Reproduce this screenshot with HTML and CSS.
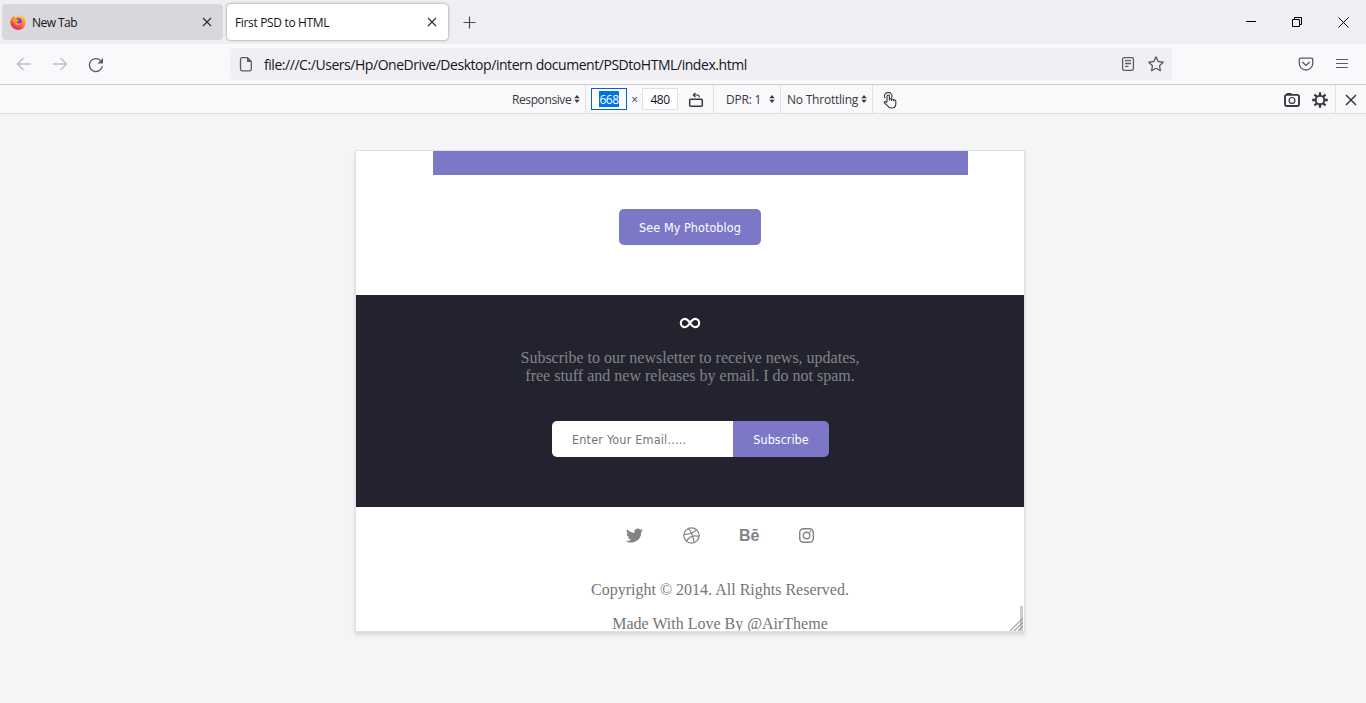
FILE: index.html
```html
<!DOCTYPE html>
<html lang="en">
<head>
<meta charset="utf-8">
<title>First PSD to HTML</title>
<link rel="stylesheet" href="styles.css">
</head>
<body>
<header class="tabbar">
  <div class="tab">
    <svg class="fox" width="16" height="16" viewBox="0 0 16 16">
      <defs>
        <linearGradient id="fire" x1=".8" y1="0" x2=".3" y2="1"><stop offset="0" stop-color="#ffe23e"/><stop offset=".45" stop-color="#ff8a28"/><stop offset=".75" stop-color="#ff4048"/><stop offset="1" stop-color="#e8208a"/></linearGradient>
      </defs>
      <path fill="url(#fire)" d="M2.2 3.2 3.7 1.7l.9 1.5 2.3-.3L9.4.3c.4 1.3 1.3 1.8 2.3 2.3l.7-.5c1.700 1.300 3.100 3.400 3.300 6.100A7.700 7.700 0 0 1 .3 8.400c0-2 .8-3.600 1.900-5.200z"/>
      <circle cx="8.300" cy="7.700" r="3.600" fill="#7a42d8"/>
      <path fill="#ff9a2c" d="M3.200 4.600c1.700-.8 3.100-.2 4.100.8l1.800.3c-.2.9-1.400 1.100-1.900 1.500-.5 1.500.5 2.300 2 2.200 1 0 1.600-.5 2.300-.3-.8 1.900-2.700 2.700-4.600 2.200-2.500-.6-4.200-3-3.700-6.700z"/>
    </svg>
    <span class="tab-title tab-new">New Tab</span>
    <svg class="tab-close" width="10" height="10" viewBox="0 0 10 10"><path d="M1 1l8 8M9 1L1 9"/></svg>
  </div>
  <div class="tab tab-active">
    <span class="tab-title">First PSD to HTML</span>
    <svg class="tab-close" width="10" height="10" viewBox="0 0 10 10"><path d="M1 1l8 8M9 1L1 9"/></svg>
  </div>
  <svg class="new-tab" width="13" height="13" viewBox="0 0 13 13"><path d="M6.500 .5v12M.5 6.500h12"/></svg>
  <div class="window-buttons">
    <svg width="10" height="10" viewBox="0 0 10 10"><path d="M0 4.500h10"/></svg>
    <svg width="10" height="10" viewBox="0 0 10 10"><path d="M.5 2.500h7v7h-7zM2.500 2.500v-2h7v7h-2"/></svg>
    <svg width="11" height="11" viewBox="0 0 11 11"><path d="M.5.5l10 10M10.500.5l-10 10"/></svg>
  </div>
</header>

<nav class="navbar">
  <svg class="nav-icon faded" width="16" height="16" viewBox="0 0 16 16"><path d="M15 8H1.500M7.500 2l-6 6 6 6"/></svg>
  <svg class="nav-icon faded" width="16" height="16" viewBox="0 0 16 16"><path d="M1 8h13.500M8.500 2l6 6-6 6"/></svg>
  <svg class="nav-icon reload" width="16" height="16" viewBox="0 0 16 16"><path d="M14.300 9A6.500 6.500 0 1 1 12.600 3.600"/><path class="solid" d="M15 1v5.500H9.500z"/></svg>
  <div class="urlbar">
    <svg class="nav-icon" width="14" height="16" viewBox="0 0 14 16"><path d="M3 1.700h5.500L12.300 5.500v7.800a1.500 1.500 0 0 1-1.500 1.500H3a1.500 1.500 0 0 1-1.500-1.500V3.200A1.500 1.500 0 0 1 3 1.700z"/><path class="solid" d="M8 1.500V6h4.500z"/></svg>
    <span class="url">file:///C:/Users/Hp/OneDrive/Desktop/intern document/PSDtoHTML/index.html</span>
    <svg class="nav-icon reader" width="14" height="16" viewBox="0 0 14 16"><rect x="1.600" y="1.600" width="10.800" height="12.800" rx="1.700"/><path d="M4 4.700h6M4 7.500h6M4 10.300h3.500"/></svg>
    <svg class="nav-icon" width="16" height="16" viewBox="0 0 16 16"><path stroke-linejoin="round" d="M8 .9l2.200 4.600 5 .7-3.700 3.500.9 5L8 12.300l-4.400 2.400.9-5L.8 6.200l5-.7z"/></svg>
  </div>
  <svg class="nav-icon pocket" width="16" height="16" viewBox="0 0 16 16"><path d="M2.500 2.200h11a1.200 1.200 0 0 1 1.200 1.200V7.500a6.700 6.500 0 0 1-13.400 0V3.400a1.200 1.200 0 0 1 1.200-1.200z"/><path stroke-linecap="round" d="M4.700 6.300L8 9.400l3.300-3.100"/></svg>
  <svg class="nav-icon menu" width="14" height="12" viewBox="0 0 14 12"><path d="M1 1.500h12M1 5.500h12M1 9.500h12"/></svg>
</nav>

<div class="rdm-bar">
  <div class="cell device">Responsive<svg class="arrows" width="6" height="8" viewBox="0 0 6 8"><path d="M3 0l2.700 3.200H.3zM3 8L.3 4.800h5.400z"/></svg></div>
  <div class="cell size">
    <span class="dim dim-focus"><mark>668</mark></span>
    <span class="times">×</span>
    <span class="dim">480</span>
    <svg class="tool rotate" width="16" height="16" viewBox="0 0 16 16"><rect x="1.700" y="7.200" width="12.600" height="7.100" rx="1"/><path stroke-width="1.200" d="M5.500 3h4q1.800 0 1.800 2.400M7.500 .9L5.300 3 7.500 5.100"/></svg>
  </div>
  <div class="cell dpr">DPR: 1<svg class="arrows" width="6" height="8" viewBox="0 0 6 8"><path d="M3 0l2.700 3.200H.3zM3 8L.3 4.800h5.400z"/></svg></div>
  <div class="cell throttle">No Throttling<svg class="arrows" width="6" height="8" viewBox="0 0 6 8"><path d="M3 0l2.700 3.200H.3zM3 8L.3 4.800h5.400z"/></svg></div>
  <svg class="touch" width="14" height="17" viewBox="0 0 14 17"><path d="M4 10V4.300a1.200 1.200 0 0 1 2.400 0V8.500V7.700a1.100 1.100 0 0 1 2.200 0V9V8.300a1.100 1.100 0 0 1 2.200 0v1V9a1 1 0 0 1 2 0v3c0 2.400-1.600 4-4.100 4-2.200 0-3.300-.8-4.200-2.300L1.400 10.900c-.6-1.200.8-1.900 1.500-1.100L4 11"/><path d="M2.200 6.300a3.700 3.700 0 1 1 6.200-.2"/></svg>
  <div class="rdm-end">
    <svg class="tool" width="16" height="16" viewBox="0 0 16 16"><path fill="#38383d" stroke="none" d="M2.500 1h5v2h-5z"/><rect x="1" y="2.900" width="14" height="11.100" rx="1.800" stroke-width="1.900"/><circle cx="8" cy="8.400" r="2.900" stroke-width="1.200"/></svg>
    <svg class="tool gear" width="16" height="16" viewBox="0 0 16 16"><circle cx="8" cy="8" r="4.300" stroke-width="1.900"/><path stroke-width="2.300" d="M8 .2v3M8 12.800v3M.2 8h3M12.800 8h3M2.500 2.500l2 2M11.500 11.500l2 2M2.500 13.500l2-2M11.500 4.500l2-2"/></svg>
  </div>
  <svg class="tool rdm-close" width="12" height="12" viewBox="0 0 12 12"><path d="M1 1l10 10M11 1L1 11"/></svg>
</div>

<main class="stage">
  <div class="viewport">
    <section class="photos">
      <div class="photo-strip"></div>
      <a class="button">See My Photoblog</a>
    </section>
    <section class="newsletter">
      <svg class="infinity" width="22" height="12" viewBox="0 0 22 12"><path d="M11 6C9.300 3.400 7.800 1.900 5.900 1.900a4.100 4.100 0 0 0 0 8.200C7.800 10.100 9.300 8.600 11 6s3.200-4.100 5.100-4.100a4.100 4.100 0 0 1 0 8.200C14.200 10.100 12.700 8.600 11 6z"/></svg>
      <p class="pitch">Subscribe to our newsletter to receive news, updates,<br>free stuff and new releases by email. I do not spam.</p>
      <div class="form"><span class="email">Enter Your Email.....</span><span class="subscribe">Subscribe</span></div>
    </section>
    <footer class="footer">
      <div class="social">
        <svg width="18" height="18" viewBox="-14 0 540 540"><path fill="#828387" d="M473.370 151.716c.325 4.548.325 9.097.325 13.645 0 138.720-105.583 298.558-298.558 298.558-59.452 0-114.680-17.219-161.137-47.106 8.447.974 16.568 1.299 25.340 1.299 49.055 0 94.213-16.568 130.274-44.832-46.132-.975-84.792-31.188-98.112-72.772 6.498.974 12.995 1.624 19.818 1.624 9.421 0 18.843-1.300 27.614-3.573-48.081-9.747-84.143-51.980-84.143-102.985v-1.299c13.969 7.797 30.214 12.670 47.431 13.319-28.264-18.843-46.781-51.005-46.781-87.391 0-19.492 5.197-37.360 14.294-52.954 51.655 63.675 129.300 105.258 216.365 109.807-1.624-7.797-2.599-15.918-2.599-24.040 0-57.828 46.782-104.934 104.934-104.934 30.213 0 57.502 12.670 76.670 33.137 23.715-4.548 46.456-13.320 66.599-25.340-7.798 24.366-24.366 44.833-46.132 57.827 21.117-2.273 41.584-8.122 60.426-16.243-14.292 20.791-32.161 39.308-52.628 54.253z"/></svg>
        <svg width="18" height="18" viewBox="-.5 0 18 18"><g class="line"><circle cx="9" cy="8.500" r="7.700"/><path d="M6 1.400c3 4 4.600 8.200 5.700 14M1.300 7.300c5 .1 9.500-.8 12.800-4.700M3.900 14.300C6.200 10 10.500 7.800 16.600 9.300"/></g></svg>
        <span class="behance">Bē</span>
        <svg width="18" height="18" viewBox="0 0 18 18"><g class="line"><rect x="1.700" y="1.700" width="13.600" height="13.600" rx="3.800" stroke-width="1.400"/><circle cx="8.500" cy="8.500" r="3.300" stroke-width="1.400"/><circle cx="12.500" cy="4.600" r=".4"/></g></svg>
      </div>
      <p class="legal">Copyright © 2014. All Rights Reserved.</p>
      <p class="legal">Made With Love By @AirTheme</p>
    </footer>
    <div class="scroll-thumb"></div>
    <svg class="grip" width="13" height="13" viewBox="0 0 13 13"><path d="M0 13L13 0M4 13l9-9M8 13l5-5"/></svg>
  </div>
</main>
</body>
</html>
```
FILE: styles.css
```css
* { box-sizing: border-box; }
body {
  margin: 0;
  height: 703px;
  overflow: hidden;
  background: #f5f5f7;
  font-family: "Open Sans", "Noto Sans", sans-serif;
  font-size: 12px;
  color: #15141a;
}
svg { flex: none; fill: none; }
span { white-space: nowrap; }

.tabbar { display: flex; align-items: center; height: 44px; padding-left: 2px; background: #f0f0f4; }
.tab { display: flex; align-items: center; width: 221px; height: 36px; padding: 0 11px 0 8px; border-radius: 4px; background: #d7d7dc; }
.tab-active { margin-left: 4px; background: #fff; box-shadow: 0 0 3px rgba(0, 0, 0, .45); }
.fox { margin-right: 6px; }
.tab-title { flex: 1; padding-top: 1px; letter-spacing: -.34px; }
.tab-new { letter-spacing: -.55px; }
.tab-close { stroke: #2b2a33; stroke-width: 1.1; }
.new-tab { margin-left: 15px; stroke: #4a4a52; stroke-width: 1.2; }
.window-buttons { display: flex; align-items: center; gap: 36px; margin-left: auto; padding-right: 17px; stroke: #000; }

.navbar { display: flex; align-items: center; height: 40px; padding: 0 17px 0 16px; background: #f9f9fb; }
.nav-icon { stroke: #5b5b66; stroke-width: 1.3; }
.nav-icon .solid { fill: #5b5b66; stroke: none; }
.menu { stroke-width: 1.2; }
.faded { margin-right: 20px; stroke: #bdbdc3; }
.reload { margin-top: 1px; }
.urlbar { display: flex; flex: none; align-items: center; width: 942px; height: 32px; margin-left: 126px; padding: 0 8px 0 9px; border-radius: 4px; background: #f0f0f4; }
.url { flex: 1; margin-left: 11px; padding-top: 1px; font-size: 14px; letter-spacing: -.45px; }
.reader { margin-right: 13px; }
.pocket { margin-left: auto; margin-right: 21px; }

.rdm-bar { display: flex; height: 30px; padding-left: 512px; border-top: 1px solid #ccc; border-bottom: 1px solid #e0e0e2; background: #f9f9fb; color: #38383d; }
.cell { display: flex; align-items: center; border-right: 1px solid #e0e0e2; letter-spacing: -.22px; }
.arrows { fill: #38383d; }
.device { width: 74px; padding-right: 5px; justify-content: space-between; letter-spacing: -.4px; }
.size { width: 128px; padding-left: 5px; }
.dim { width: 36px; height: 22px; border: 1px solid #e0e0e2; background: #fff; line-height: 21px; text-align: center; letter-spacing: -.5px; color: #15141a; }
.dim-focus { border: 1px solid #0060df; }
.dim mark { display: inline-block; height: 16px; line-height: 17px; background: #0074e0; color: #fff; }
.times { width: 15px; text-align: center; }
.tool { stroke: #38383d; stroke-width: 1.5; }
.rotate { margin-left: 10px; margin-top: 1px; }
.dpr { width: 67px; padding: 0 5px 0 12px; justify-content: space-between; }
.throttle { width: 92px; padding: 0 5px 0 6px; justify-content: space-between; }
.touch { align-self: center; margin-left: 10px; margin-top: 2px; stroke: #38383d; stroke-width: 1.1; }
.rdm-end { display: flex; align-items: center; gap: 12px; margin-left: auto; padding: 2px 7px 0 0; border-right: 1px solid #e0e0e2; }
.rdm-close { align-self: center; margin: 2px 9px 0; }

.stage { padding: 36px 0 0 355px; }
.viewport { position: relative; width: 670px; height: 482px; overflow: hidden; border: 1px solid #e0e0e2; background: #fff; box-shadow: 0 3px 4px rgba(0, 0, 0, .12); }
.photos { display: flex; flex-direction: column; align-items: center; height: 144px; }
.photo-strip { align-self: flex-start; width: 535px; height: 24px; margin: 0 0 34px 77px; background: #7d77c8; }
.button, .email, .subscribe { height: 36px; line-height: 37px; font-family: "DejaVu Sans Condensed", "DejaVu Sans", sans-serif; font-stretch: condensed; font-size: 12.500px; }
.button { width: 142px; border-radius: 5px; background: #7d77c8; color: #fff; text-align: center; letter-spacing: .06px; }
.newsletter { display: flex; flex-direction: column; align-items: center; height: 212px; padding-top: 22px; background: #23232f; }
.infinity { stroke: #fff; stroke-width: 2.100; }
.pitch { margin: 20px 0 0; font: 16px/18px "Liberation Serif", serif; text-align: center; color: #828387; }
.form { display: flex; width: 277px; margin: 36px 0 0 1px; overflow: hidden; border-radius: 5px; }
.email { width: 181px; padding-left: 20px; background: #fff; color: #757575; letter-spacing: .19px; }
.subscribe { flex: 1; background: #7d77c8; color: #fff; text-align: center; }
.footer { width: 608px; margin-left: 60px; text-align: center; }
.social { display: flex; align-items: center; justify-content: center; height: 58px; gap: 39px; padding-left: 1px; }
.line { stroke: #828387; stroke-width: 1.200; }
.behance { width: 20px; font: bold 16px/18px "Liberation Sans", sans-serif; letter-spacing: -.1px; color: #828387; }
.legal { margin: 0 0 16px; font: 16px/18px "Liberation Serif", serif; color: #757575; }
.social + .legal { margin-top: 16px; }
.scroll-thumb { position: absolute; right: 1px; bottom: 0; width: 3px; height: 25px; background: #ccc; }
.grip { position: absolute; right: 1px; bottom: 0; stroke: #999; stroke-width: 1.100; }
```
